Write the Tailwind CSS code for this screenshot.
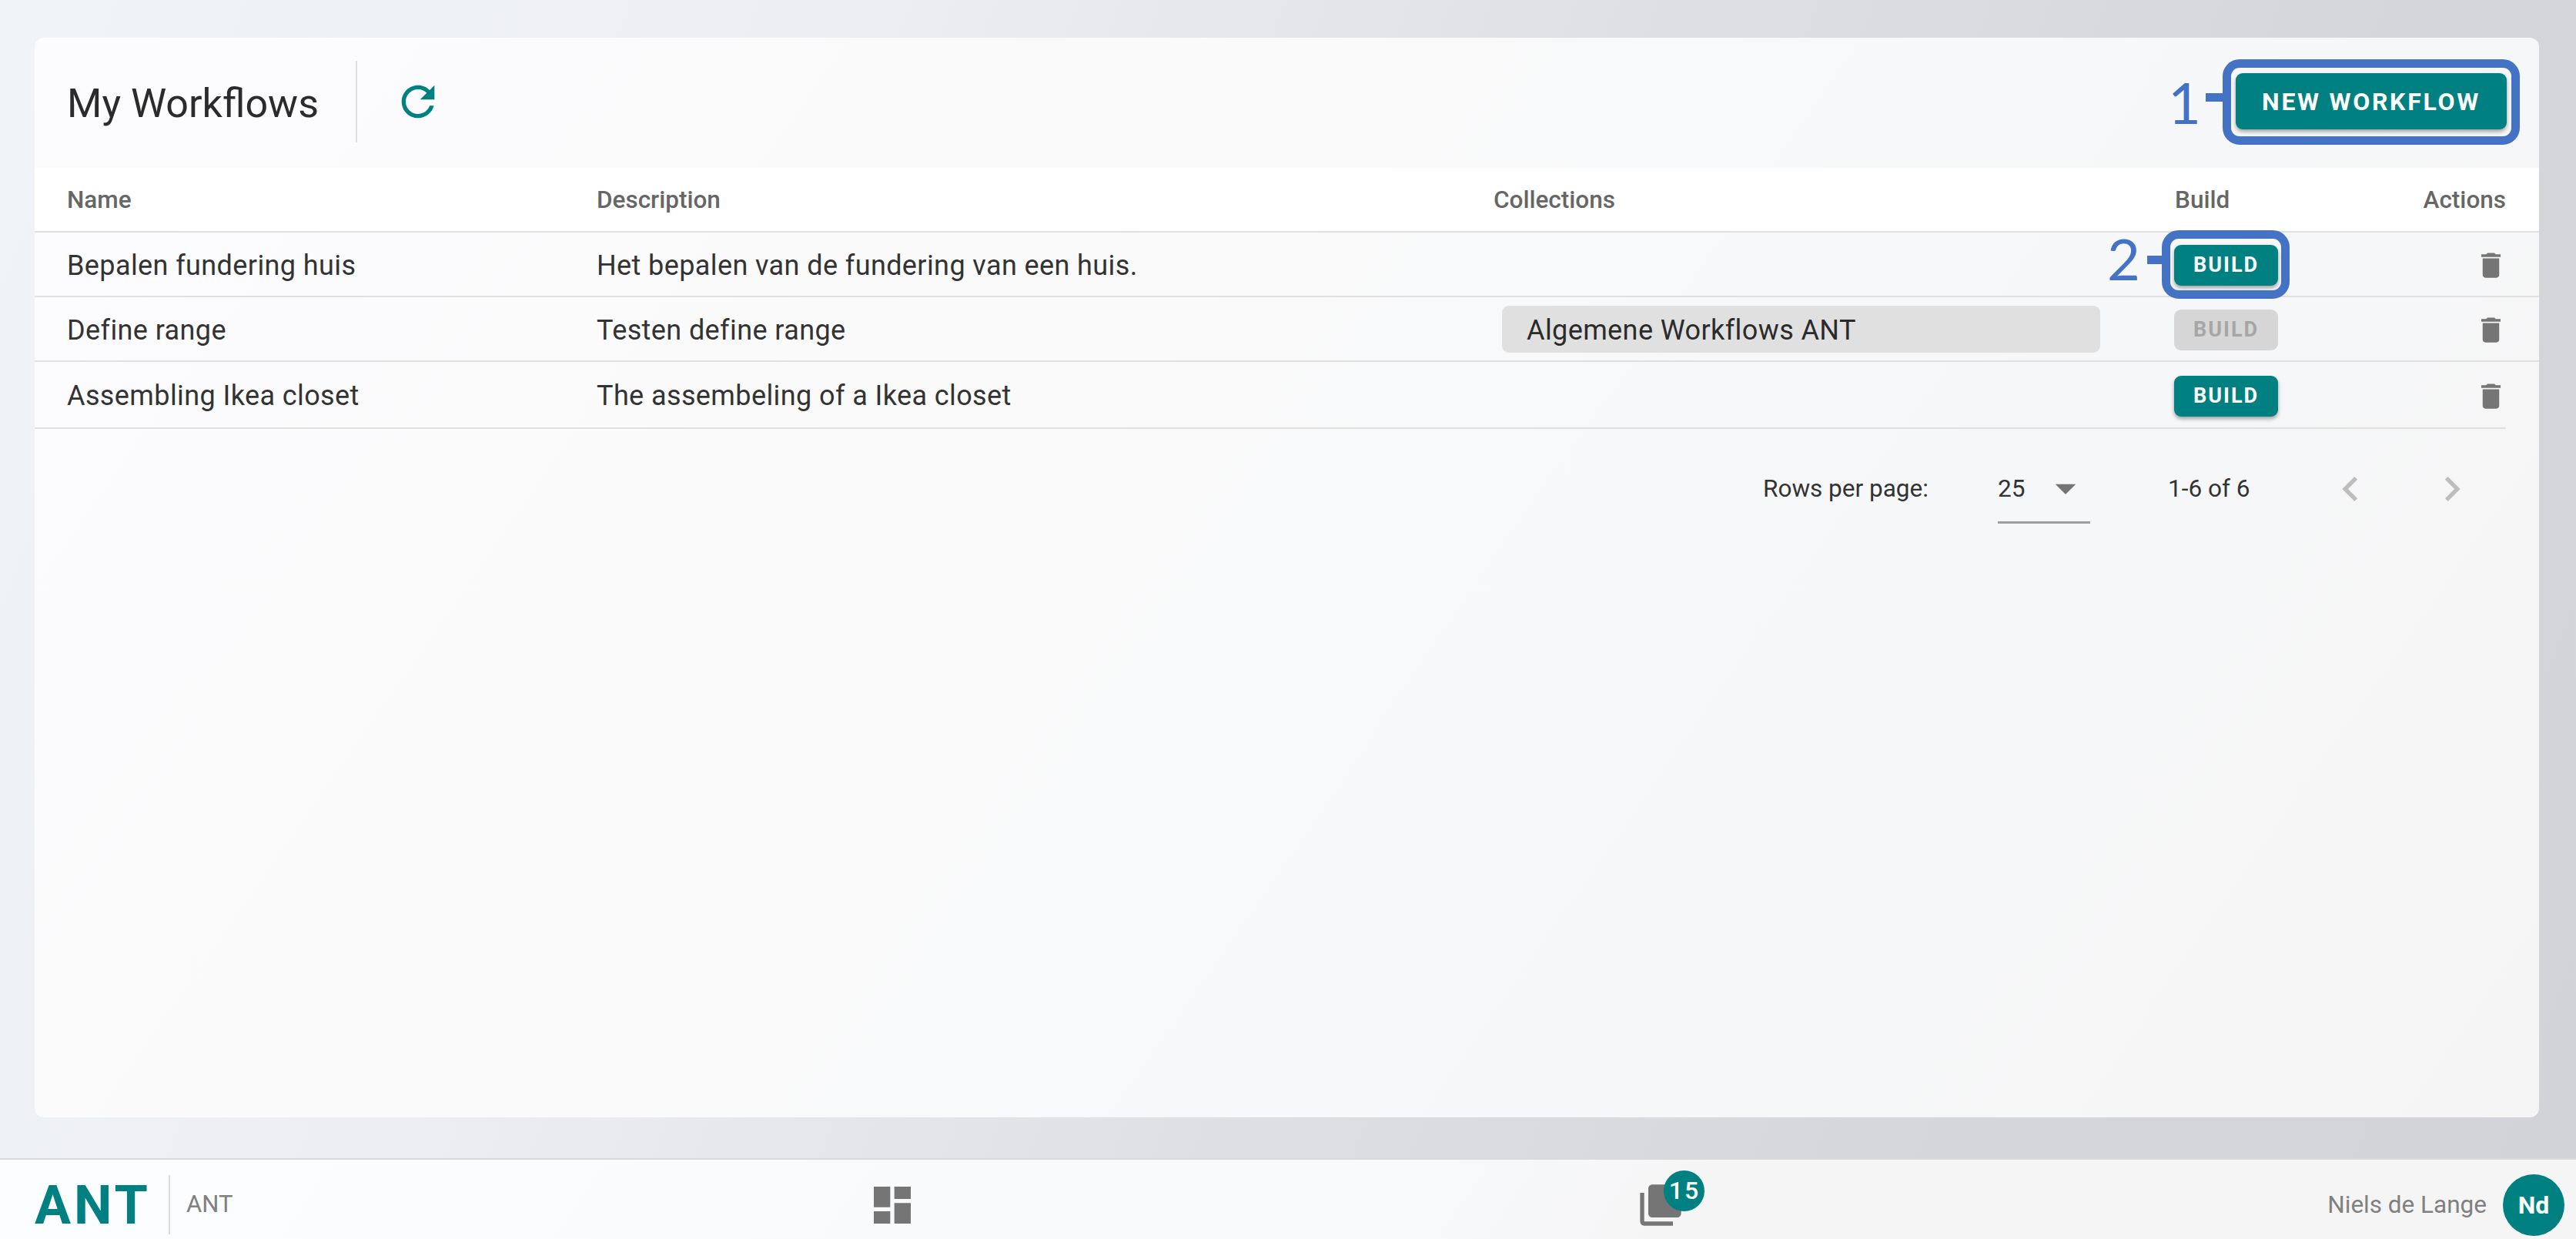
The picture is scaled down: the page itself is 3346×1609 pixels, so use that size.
<!DOCTYPE html>
<html lang="en">
<head>
	<meta charset="UTF-8">
	<title>My Workflows - ANT</title>
	<script src="https://cdn.jsdelivr.net/npm/@tailwindcss/browser@4"></script>
</head>
<body class="font-['Roboto',sans-serif]">
	<div class="relative h-[1609px] w-[3346px] overflow-hidden bg-[linear-gradient(112deg,#f0f3f8_0%,#eceef3_28%,#dddfe3_55%,#d6d7db_75%,#d2d3d8_100%)]">
		<!-- Main card -->
		<main class="absolute left-[45px] top-[49px] h-[1402px] w-[3253px] overflow-hidden rounded-[12px] bg-[linear-gradient(125deg,#fcfcfe_0%,#fafafb_35%,#f7f8f9_60%,#f5f5f6_100%)]">
			<!-- Title bar -->
			<header class="flex h-[169px] items-center pl-[43px] pr-[42px]">
				<h1 class="ml-[-1px] w-[375px] whitespace-nowrap pt-[3px] text-[52px] font-normal leading-none text-[#2b2b2b]">My Workflows</h1>
				<div class="mt-[-4px] h-[106px] w-[2px] bg-[#e0e0e0]"></div>
				<svg viewBox="0 0 24 24" class="ml-[47px] mt-[-4px] h-[64px] w-[64px] fill-[#008080]"><path d="M17.65 6.35C16.2 4.9 14.21 4 12 4c-4.42 0-7.99 3.58-7.99 8s3.57 8 7.99 8c3.73 0 6.84-2.55 7.73-6h-2.08c-.82 2.33-3.04 4-5.65 4-3.31 0-6-2.69-6-6s2.69-6 6-6c1.66 0 3.14.69 4.22 1.78L13 11h7V4l-2.35 2.35z"/></svg>
				<button class="mb-[4px] ml-auto flex h-[73px] w-[352px] items-center justify-center rounded-[9px] bg-[#008080] text-[32px] font-bold tracking-[2.7px] text-white shadow-[0_3px_5px_rgba(0,0,0,0.35)]">NEW WORKFLOW</button>
			</header>

			<!-- Table head -->
			<div class="grid h-[84px] grid-cols-[687px_1165px_885px_250px_181px] items-center border-b-2 border-[#e0e0e0] bg-white pl-[42px] pr-[42px] pt-[2px] text-[31.5px] font-medium text-[#666666]">
				<div class="w-[688px]">Name</div>
				<div class="ml-[1px]">Description</div>
				<div class="ml-[1px]">Collections</div>
				<div class="ml-[1px]">Build</div>
				<div class="ml-[1px] text-right">Actions</div>
			</div>

			<!-- Rows -->
			<div class="grid h-[84px] grid-cols-[687px_1165px_885px_250px_181px] items-center border-b-2 border-[#e0e0e0] pl-[43px] pr-[42px] text-[36px] tracking-[0.4px] text-[#333333]">
				<div class="ml-[-1px] pt-[3px]">Bepalen fundering huis</div>
				<div class="pt-[3px]">Het bepalen van de fundering van een huis.</div>
				<div></div>
				<div><button class="ml-[-1px] mt-[2px] flex h-[53px] w-[135px] items-center justify-center rounded-[9px] bg-[#008080] text-[27px] font-bold tracking-[2px] text-white shadow-[0_3px_5px_rgba(0,0,0,0.35)]">BUILD</button></div>
				<div class="flex justify-end"><svg viewBox="0 0 24 24" class="mr-[-1px] mt-[3px] h-[43px] w-[43px] fill-[#757575]"><path d="M6 19c0 1.1.9 2 2 2h8c1.1 0 2-.9 2-2V7H6v12zM19 4h-3.5l-1-1h-5l-1 1H5v2h14V4z"/></svg></div>
			</div>
			<div class="grid h-[84px] grid-cols-[687px_1165px_885px_250px_181px] items-center border-b-2 border-[#e0e0e0] pl-[43px] pr-[42px] text-[36px] tracking-[0.4px] text-[#333333]">
				<div class="ml-[-1px] pt-[3px]">Define range</div>
				<div class="pt-[3px]">Testen define range</div>
				<div><div class="ml-[11px] flex h-[61px] w-[777px] items-center rounded-[9px] bg-[#e0e0e0] pl-[32px] pt-[3px] text-[#2b2b2b]">Algemene Workflows ANT</div></div>
				<div><button class="ml-[-1px] mt-[2px] flex h-[53px] w-[135px] items-center justify-center rounded-[9px] bg-[#d6d6d6] text-[27px] font-bold tracking-[2px] text-[#a6a6a6]">BUILD</button></div>
				<div class="flex justify-end"><svg viewBox="0 0 24 24" class="mr-[-1px] mt-[3px] h-[43px] w-[43px] fill-[#757575]"><path d="M6 19c0 1.1.9 2 2 2h8c1.1 0 2-.9 2-2V7H6v12zM19 4h-3.5l-1-1h-5l-1 1H5v2h14V4z"/></svg></div>
			</div>
			<div class="mr-[43px] grid h-[87px] grid-cols-[687px_1165px_885px_250px_181px] items-center border-b-2 border-[#e0e0e0] pl-[43px] text-[36px] tracking-[0.4px] text-[#333333]">
				<div class="ml-[-1px] pt-[3px]">Assembling Ikea closet</div>
				<div class="pt-[3px]">The assembeling of a Ikea closet</div>
				<div></div>
				<div><button class="ml-[-1px] mt-[3px] flex h-[53px] w-[135px] items-center justify-center rounded-[9px] bg-[#008080] text-[27px] font-bold tracking-[2px] text-white shadow-[0_3px_5px_rgba(0,0,0,0.35)]">BUILD</button></div>
				<div class="flex justify-end"><svg viewBox="0 0 24 24" class="mr-[-1px] mt-[3px] h-[43px] w-[43px] fill-[#757575]"><path d="M6 19c0 1.1.9 2 2 2h8c1.1 0 2-.9 2-2V7H6v12zM19 4h-3.5l-1-1h-5l-1 1H5v2h14V4z"/></svg></div>
			</div>

			<!-- Pagination -->
			<div class="flex h-[156px] items-center text-[31.5px] text-[#333333]">
				<span class="ml-[2245px] w-[305px]">Rows per page:</span>
				<div class="relative flex h-[90px] w-[120px] items-center border-b-[3px] border-[#9e9e9e] pt-[2px]">
					<span>25</span>
					<svg viewBox="0 0 24 24" class="absolute left-[56px] top-[12px] h-[64px] w-[64px] fill-[#757575]"><path d="M7 10l5 5 5-5z"/></svg>
				</div>
				<span class="ml-[101px] w-[105px] whitespace-nowrap">1-6 of 6</span>
				<svg viewBox="0 0 24 24" class="ml-[100px] h-[64px] w-[64px] fill-[#bdbdbd]"><path d="M15.41 7.41L14 6l-6 6 6 6 1.41-1.41L10.83 12z"/></svg>
				<svg viewBox="0 0 24 24" class="ml-[68px] h-[64px] w-[64px] fill-[#bdbdbd]"><path d="M10 6L8.59 7.41 13.17 12l-4.58 4.59L10 18l6-6z"/></svg>
			</div>
		</main>

		<!-- Footer -->
		<footer class="absolute bottom-0 left-0 flex h-[105px] w-[3346px] items-center border-t-2 border-[#d8d9dc] bg-[linear-gradient(125deg,#fcfdfe_0%,#f8f9fb_55%,#f5f5f6_65%,#f5f5f6_100%)] pt-[14px]">
			<span class="ml-[45px] w-[174px] text-[70px] font-bold leading-none tracking-[4px] text-[#008080]">ANT</span>
			<div class="h-[77px] w-[2px] bg-[#dcdcdc]"></div>
			<span class="ml-[21px] text-[31px] text-[#808080]">ANT</span>
			<svg viewBox="0 0 24 24" class="ml-[825px] h-[64px] w-[64px] fill-[#757575]"><path d="M3 13h8V3H3v10zm0 8h8v-6H3v6zm10 0h8V11h-8v10zm0-18v6h8V3h-8z"/></svg>
			<div class="relative ml-[934px] h-[64px] w-[64px]">
				<svg viewBox="0 0 24 24" class="h-[64px] w-[64px] fill-[#757575]"><path d="M4 6H2v14c0 1.1.9 2 2 2h14v-2H4V6zm16-4H8c-1.1 0-2 .9-2 2v12c0 1.1.9 2 2 2h12c1.1 0 2-.9 2-2V4c0-1.1-.9-2-2-2z"/></svg>
				<span class="absolute left-[36px] top-[-13px] flex h-[53px] w-[53px] items-center justify-center rounded-full bg-[#008080] text-[32px] font-medium tracking-[2px] text-white">15</span>
			</div>
			<span class="ml-auto text-[31.5px] text-[#808080]">Niels de Lange</span>
			<span class="ml-[21px] mr-[15px] flex h-[80px] w-[80px] items-center justify-center rounded-full bg-[#008080] text-[32px] font-bold text-white">Nd</span>
		</footer>

		<!-- Annotation callouts -->
		<span class="absolute left-[2816px] top-[83px] font-['Lato',sans-serif] text-[74px] leading-[100px] text-[#4472c4]">1</span>
		<div class="absolute left-[2865px] top-[121px] h-[11px] w-[22px] bg-[#4472c4]"></div>
		<div class="absolute left-[2887px] top-[77px] h-[111px] w-[386px] rounded-[22px] border-[11px] border-[#4472c4]"></div>
		<span class="absolute left-[2737px] top-[286px] font-['Lato',sans-serif] text-[74px] leading-[100px] text-[#4472c4]">2</span>
		<div class="absolute left-[2789px] top-[332px] h-[11px] w-[19px] bg-[#4472c4]"></div>
		<div class="absolute left-[2808px] top-[299px] h-[89px] w-[166px] rounded-[22px] border-[11px] border-[#4472c4]"></div>
	</div>
</body>
</html>
